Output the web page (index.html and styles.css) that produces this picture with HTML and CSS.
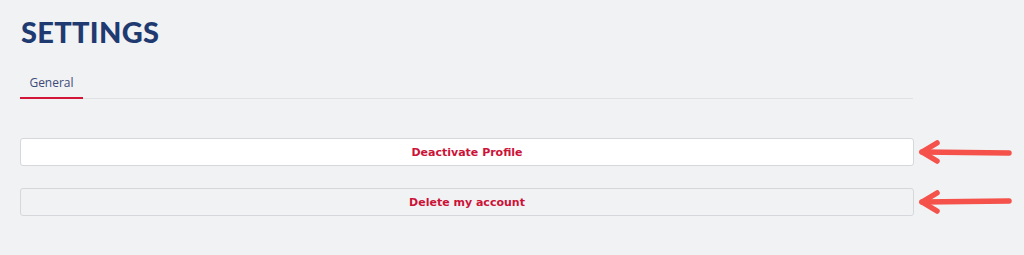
FILE: index.html
```html
<!DOCTYPE html>
<html>
<head>
<meta charset="utf-8">
<link rel="stylesheet" href="styles.css">
</head>
<body>
<div class="page">
  <h1 class="title">SETTINGS</h1>
  <div class="tabs">
    <div class="tab active">General</div>
  </div>
  <div class="actions">
    <div class="row">
      <button class="btn btn-white">Deactivate Profile</button>
      <svg class="arrow" width="100" height="28" viewBox="0 0 100 28"><g fill="none" stroke="#f4524a" stroke-width="5.5" stroke-linecap="round" stroke-linejoin="round"><path d="M5 14 L92 15"/><path d="M20 5 L5 14 L20 23"/></g></svg>
    </div>
    <div class="row">
      <button class="btn btn-gray">Delete my account</button>
      <svg class="arrow" width="100" height="28" viewBox="0 0 100 28"><g fill="none" stroke="#f4524a" stroke-width="5.5" stroke-linecap="round" stroke-linejoin="round"><path d="M5 14 L92 13"/><path d="M20 5 L5 14 L20 23"/></g></svg>
    </div>
  </div>
</div>
</body>
</html>
```
FILE: styles.css
```css
html, body {
  margin: 0;
  padding: 0;
  background: #f1f2f4;
}
.page {
  padding: 15px 20px 0 20px;
  font-family: "DejaVu Sans", "Open Sans", sans-serif;
}
.title {
  margin: 0 0 0 1px;
  font-family: "Lato", sans-serif;
  font-size: 29px;
  line-height: 34px;
  font-weight: 900;
  color: #1f3a70;
  letter-spacing: 0.3px;
}
.tabs {
  margin-top: 22px;
  width: 893px;
  border-bottom: 1px solid #dfe1e5;
  display: flex;
}
.tab {
  padding: 2px 9px 0 9px;
  height: 28px;
  line-height: 20px;
  font-size: 12px;
  color: #3c4a78;
  font-family: "Open Sans", sans-serif;
  box-sizing: border-box;
  width: 63px;
  text-align: center;
  margin-bottom: -1px;
}
.tab.active {
  border-bottom: 2px solid #d31638;
}
.actions {
  margin-top: 39px;
  display: flex;
  flex-direction: column;
  gap: 22px;
}
.row {
  display: flex;
  align-items: center;
}
.btn {
  flex: none;
  width: 894px;
  height: 28px;
  border: 1px solid #d6d7da;
  border-radius: 3px;
  font-family: "DejaVu Sans", sans-serif;
  font-weight: bold;
  font-size: 11px;
  color: #cc1237;
  padding: 0;
  box-sizing: border-box;
}
.btn-white { background: #ffffff; }
.btn-gray { background: #f1f2f4; }
.arrow {
  flex: none;
  margin-left: 3px;
  display: block;
}
```
